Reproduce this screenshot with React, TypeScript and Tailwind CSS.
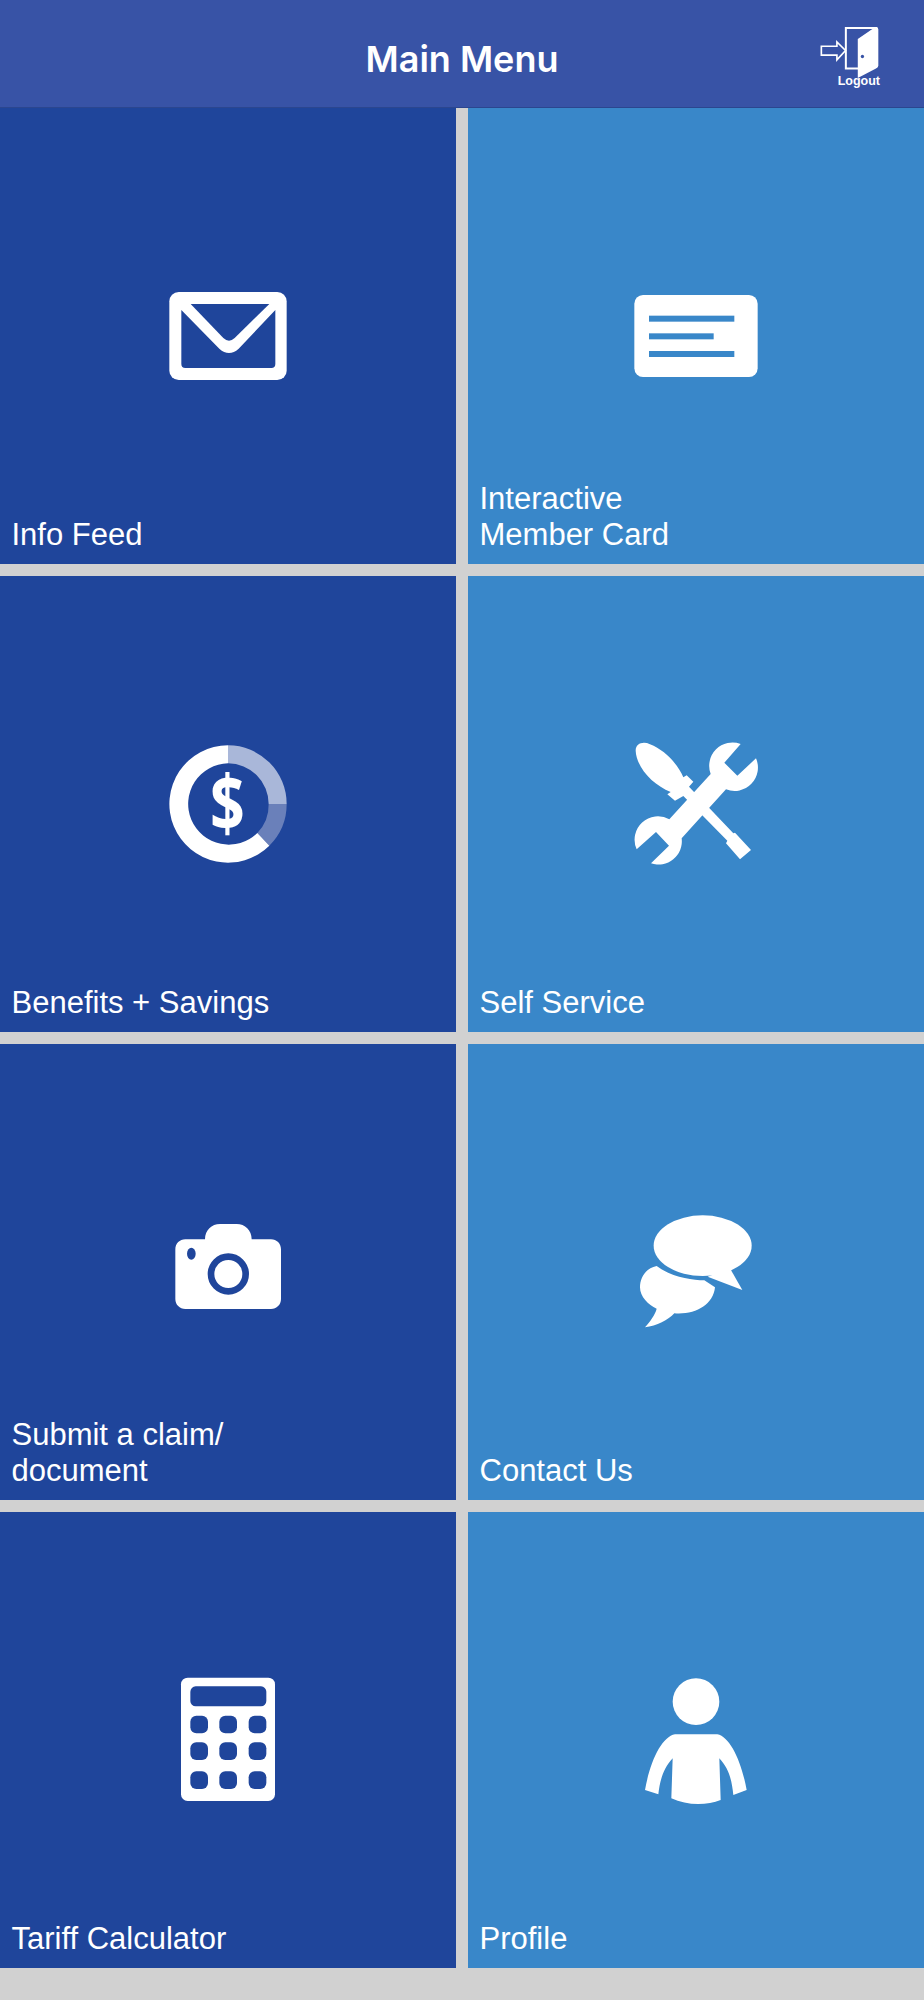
import type { ReactNode } from "react";

const DARK = "#1f459b";
const LIGHT = "#3987c9";

function Icon({ box, children }: { box: string; children: ReactNode }) {
  return (
    <svg viewBox={box} className="h-[150px] w-[150px] place-self-center [grid-area:1/1]">
      {children}
    </svg>
  );
}

const MailIcon = () => (
  <Icon box="9 -27 450 450">
    <rect x="58" y="66" width="352" height="264" rx="28" fill="#fff" />
    <path d="M122 102 H358 L254 204 Q237 220 220 204 Z" fill={DARK} />
    <path
      d="M94 120 L208 236 Q237 262 266 236 L376 120 V282 Q376 294 364 294 H106 Q94 294 94 282 Z"
      fill={DARK}
    />
  </Icon>
);

const CardIcon = () => (
  <Icon box="18 -42 450 450">
    <rect x="58" y="60" width="370" height="246" rx="26" fill="#fff" />
    <rect x="102" y="122" width="256" height="18" fill={LIGHT} />
    <rect x="102" y="175" width="194" height="18" fill={LIGHT} />
    <rect x="102" y="228" width="256" height="18" fill={LIGHT} />
  </Icon>
);

const SavingsIcon = () => (
  <Icon box="9 -3 450 450">
    <path d="M234 46 A176 176 0 0 1 410 222 H356 A122 122 0 0 0 234 100 Z" fill="#a9b7d9" />
    <path d="M410 222 A176 176 0 0 1 358 347 L322 309 A122 122 0 0 0 356 222 Z" fill="#6a80ba" />
    <path
      d="M358 347 A176 176 0 1 1 234 46 V100 A122 122 0 1 0 322 309 Z"
      fill="#fff"
    />
    <text
      x="234"
      y="292"
      textAnchor="middle"
      transform="translate(232.5 222) scale(0.89 1.126) translate(-234 -220.5)"
      fill="#fff"
      fontSize="205"
      fontWeight="700"
      fontFamily='"Open Sans", sans-serif'
    >
      $
    </text>
  </Icon>
);

const ToolsIcon = () => (
  <Icon box="3 -3 450 450">
    <path
      fill="#fff"
      d="M47 62 C47 40 70 33 90 43 C135 60 175 105 190 142 L200 136 L220 155 L207 170 L340 310 L345 308 L393 360 L360 388 L318 340 L322 332 L190 198 L165 212 L142 193 L152 186 C100 165 50 115 47 62 Z"
    />
    <path
      fill="#fff"
      d="M362 42 A70 70 0 0 0 272 132 L148 268 A70 70 0 0 0 50 358 L108 306 L147 347 L93 400 A70 70 0 0 0 185 325 L318 178 A70 70 0 0 0 408 85 L352 137 L313 98 Z"
    />
  </Icon>
);

const CameraIcon = () => (
  <Icon box="-21 -39 450 450">
    <path
      fill="#fff"
      d="M135 88 C135 60 155 42 180 42 H230 C255 42 275 60 275 88 H333 C350 88 363 101 363 118 V267 C363 284 350 297 333 297 H76 C59 297 46 284 46 267 V118 C46 101 59 88 76 88 Z"
    />
    <circle cx="205" cy="192" r="52" fill="#fff" stroke={DARK} strokeWidth="20" />
    <ellipse cx="94" cy="131" rx="13" ry="18" fill={DARK} />
  </Icon>
);

const ChatIcon = () => (
  <Icon box="-12 -9 450 450">
    <ellipse cx="233" cy="137" rx="147" ry="91" fill="#fff" />
    <path d="M315 205 L352 270 L248 230 Z" fill="#fff" />
    <path
      fill="#fff"
      d="M95 198 C60 205 45 235 45 262 C45 290 70 315 95 326 C90 345 75 365 60 382 C95 378 130 360 148 340 C210 345 265 315 270 262 L238 241 C200 240 140 232 95 198 Z"
    />
  </Icon>
);

const CalculatorIcon = () => (
  <Icon box="-36 0 450 450">
    <rect x="48" y="38" width="282" height="370" rx="20" fill="#fff" />
    <rect x="76" y="64" width="228" height="60" rx="16" fill={DARK} />
    {[152, 232, 319].map((y) =>
      [76, 163, 251].map((x) => (
        <rect key={`${x}-${y}`} x={x} y={y} width="53" height="53" rx="18" fill={DARK} />
      )),
    )}
  </Icon>
);

const PersonIcon = () => (
  <Icon box="-27 0 450 450">
    <circle cx="198" cy="110" r="70" fill="#fff" />
    <path
      fill="#fff"
      d="M135 208 H262 C300 215 335 290 350 375 L310 390 C305 340 295 310 268 280 L272 405 C230 422 170 422 124 400 L128 280 C100 310 90 345 85 388 L45 375 C60 290 95 215 135 208 Z"
    />
  </Icon>
);

const LogoutIcon = () => (
  <svg viewBox="86 48 184 160" className="block h-[53px] w-[61px]">
    <path d="M205 176 H167 V54 H262" fill="none" stroke="#fff" strokeWidth="6" />
    <path d="M203 87 L246 58 L258 52 Q265 52 265 58 V168 Q265 173 258 176 L203 205 Z" fill="#fff" />
    <circle cx="217" cy="140" r="5" fill="#3853a6" />
    <path
      d="M93 109 H140 V96 L166 122 L140 150 V136 H93 Z"
      fill="none"
      stroke="#fff"
      strokeWidth="5"
    />
  </svg>
);

const tiles = [
  { label: ["Info Feed"], icon: <MailIcon />, dark: true },
  { label: ["Interactive", "Member Card"], icon: <CardIcon />, dark: false },
  { label: ["Benefits + Savings"], icon: <SavingsIcon />, dark: true },
  { label: ["Self Service"], icon: <ToolsIcon />, dark: false },
  { label: ["Submit a claim/", "document"], icon: <CameraIcon />, dark: true },
  { label: ["Contact Us"], icon: <ChatIcon />, dark: false },
  { label: ["Tariff Calculator"], icon: <CalculatorIcon />, dark: true },
  { label: ["Profile"], icon: <PersonIcon />, dark: false },
];

export default function App() {
  return (
    <div className="min-h-[2000px] bg-[#d1d1d1] font-['Liberation_Sans',sans-serif]">
      <header className="grid h-[108px] grid-cols-[1fr_auto_1fr] items-center border-b border-[#2b468f] bg-[#3853a6] text-white">
        <div />
        <h1 className="pt-[11px] font-['Inter',sans-serif] text-[36px] font-semibold">Main Menu</h1>
        <div className="flex flex-col items-end justify-self-end pt-[7px] pr-[44px]">
          <LogoutIcon />
          <span className="-mt-[5px] text-[12.5px] leading-[14px] font-bold">Logout</span>
        </div>
      </header>

      <div className="grid grid-cols-2 gap-3">
        {tiles.map(({ label, icon, dark }) => (
          <div
            key={label.join(" ")}
            className={
              dark
                ? "grid h-[456px] bg-[#1f459b] text-white"
                : "grid h-[456px] bg-[#3987c9] text-white"
            }
          >
            {icon}
            <div className="self-end px-[11.5px] pb-[11px] text-[31px] leading-[36px] [grid-area:1/1]">
              {label.map((line) => (
                <div key={line}>{line}</div>
              ))}
            </div>
          </div>
        ))}
      </div>
    </div>
  );
}
